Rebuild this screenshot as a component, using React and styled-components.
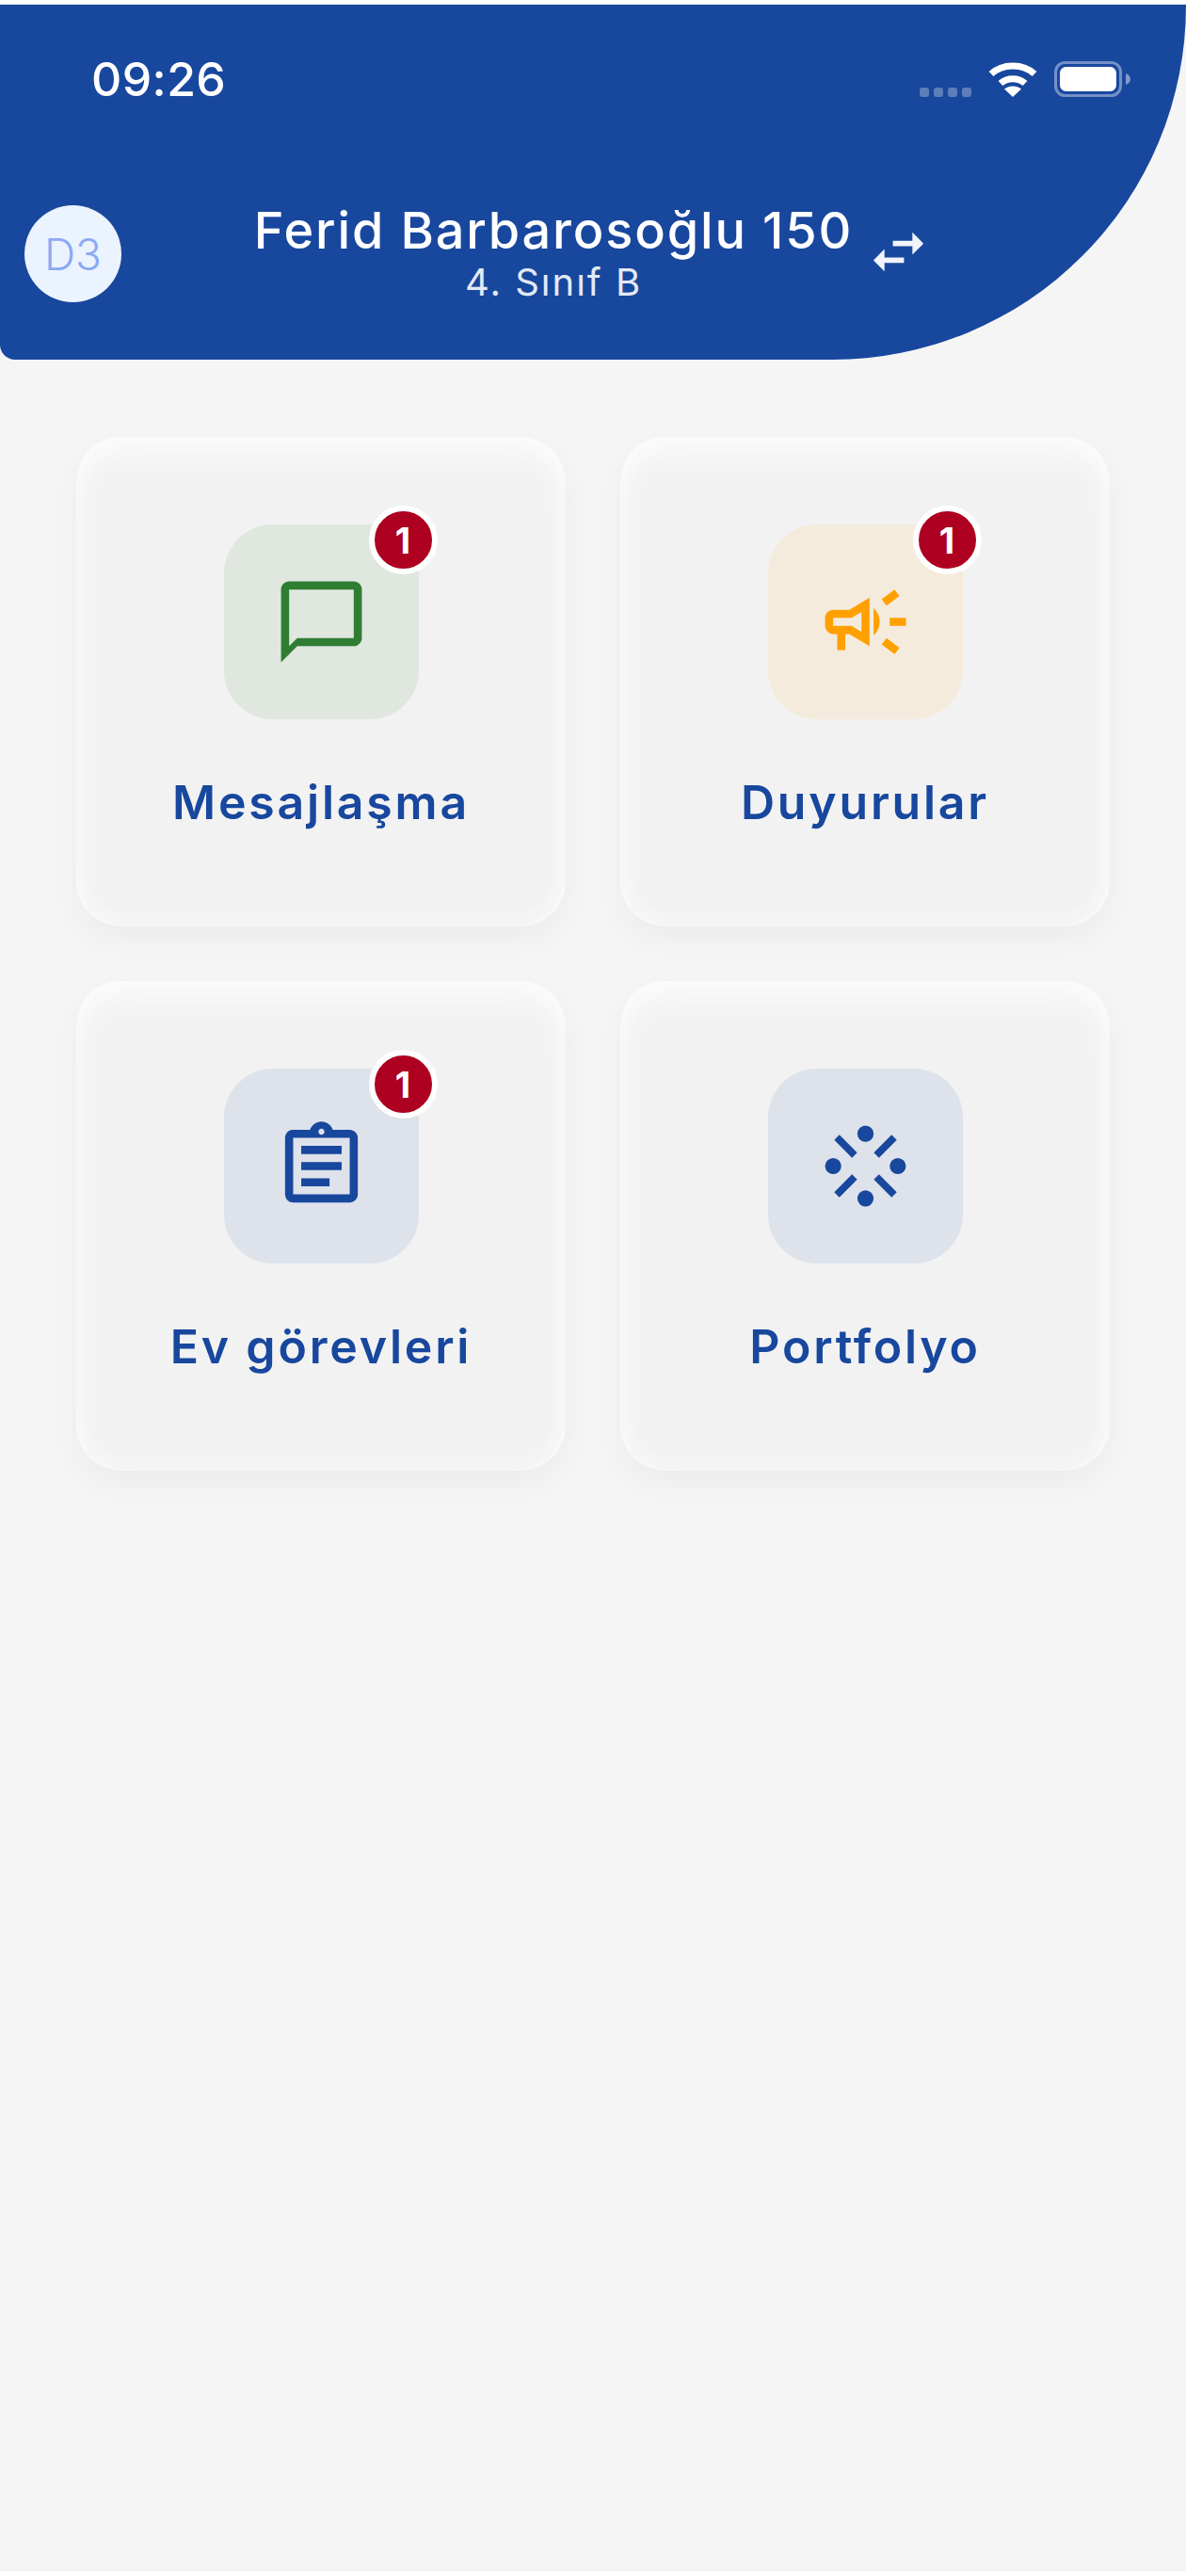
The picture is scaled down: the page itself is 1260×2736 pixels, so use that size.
import React from "react";
import styled, { createGlobalStyle } from "styled-components";
import {
  MdOutlineAssignment,
  MdOutlineCampaign,
  MdOutlineChatBubbleOutline,
  MdSwapHoriz,
} from "react-icons/md";

const BLUE = "#18479e";

const GlobalStyle = createGlobalStyle`
  html, body {
    margin: 0;
    padding: 0;
    background: #fff;
  }
  * {
    box-sizing: border-box;
  }
`;

const Screen = styled.div`
  width: 1260px;
  height: 2736px;
  padding: 4px 0 5px;
  overflow: hidden;
  background: #fff;
  font-family: Inter, "Noto Sans", sans-serif;
`;

const Page = styled.div`
  height: 100%;
  border-top: 1px solid #e1e4e8;
  background: #f5f5f5;
`;

const Header = styled.header`
  height: 377px;
  background: ${BLUE};
  border-radius: 0 0 376px 16px;
`;

const StatusBar = styled.div`
  display: flex;
  align-items: flex-end;
  justify-content: space-between;
  height: 98px;
  padding: 0 59px 0 97px;
  color: #fff;
`;

const Time = styled.span`
  font-size: 50px;
  font-weight: 550;
  line-height: 37px;
  letter-spacing: 0.4px;
`;

const StatusIcons = styled.div`
  display: flex;
  align-items: flex-end;
`;

const SignalDots = styled.div`
  display: flex;
  gap: 5px;
  margin-right: 18px;
`;

const SignalDot = styled.span`
  width: 10px;
  height: 10px;
  border-radius: 3px;
  background: rgba(255, 255, 255, 0.3);
`;

const WifiIcon = styled.svg`
  display: block;
  width: 52px;
  height: 39px;
  margin-right: 18px;
`;

const BatteryIcon = styled.svg`
  display: block;
  width: 81px;
  height: 38px;
`;

const Profile = styled.div`
  display: flex;
  align-items: flex-start;
  margin-top: 115px;
  padding-left: 26px;
`;

const Avatar = styled.div`
  display: flex;
  align-items: center;
  justify-content: center;
  flex: none;
  width: 103px;
  height: 103px;
  border-radius: 50%;
  background: #ebf3ff;
  color: #8aa9f5;
  font-size: 46px;
  font-weight: 300;
`;

const Student = styled.div`
  display: flex;
  flex-direction: column;
  align-items: center;
  gap: 8px;
  width: 632px;
  margin-left: 143px;
  padding-top: 2px;
`;

const StudentName = styled.div`
  font-size: 54px;
  font-weight: 500;
  line-height: 50px;
  letter-spacing: 1.85px;
  color: #fff;
  white-space: nowrap;
`;

const StudentClass = styled.div`
  font-size: 40px;
  font-weight: 400;
  line-height: 44px;
  letter-spacing: 2px;
  color: #e3e9f5;
  white-space: nowrap;
`;

const SwapButton = styled.div`
  display: flex;
  margin: 14px 0 0 15px;
  color: #f1f4fa;
  font-size: 71px;
  line-height: 0;
`;

const Grid = styled.main`
  display: grid;
  grid-template-columns: repeat(2, 520px);
  grid-auto-rows: 520px;
  gap: 58px;
  padding: 82px 0 0 81px;
`;

const Card = styled.div`
  display: flex;
  flex-direction: column;
  align-items: center;
  padding-top: 93px;
  border-radius: 48px;
  background: #f2f2f2;
  box-shadow:
    0 14px 34px rgba(0, 0, 0, 0.04),
    inset 0 16px 30px rgba(255, 255, 255, 0.7),
    inset 0 -8px 26px rgba(255, 255, 255, 0.3),
    inset 0 0 34px rgba(255, 255, 255, 0.3);
`;

const IconTile = styled.div`
  position: relative;
  display: flex;
  align-items: center;
  justify-content: center;
  width: 207px;
  height: 207px;
  border-radius: 52px;
  background: ${(p) => p.$bg};
  color: ${(p) => p.$fg};
  font-size: 103px;
  line-height: 0;
`;

const Badge = styled.span`
  position: absolute;
  top: -20px;
  right: -20px;
  display: flex;
  align-items: center;
  justify-content: center;
  width: 73px;
  height: 73px;
  border: 6px solid #fff;
  border-radius: 50%;
  background: #ae0020;
  color: #fff;
  font-size: 38px;
  font-weight: 700;
  line-height: 1;
`;

const CardLabel = styled.div`
  margin-top: 58px;
  font-size: 50px;
  font-weight: 600;
  line-height: 60px;
  letter-spacing: 2.8px;
  color: ${BLUE};
  white-space: nowrap;
`;

function Wifi() {
  return (
    <WifiIcon viewBox="0 0 52 39" fill="none">
      <path d="M3 14.5C15 3 37 3 49 14.5" stroke="#fff" strokeWidth="7" />
      <path d="M13 24.5C20 18 32 18 39 24.5" stroke="#fff" strokeWidth="7" />
      <path d="M26 39 L17 30.5 C22 26.5 30 26.5 35 30.5 Z" fill="#fff" />
    </WifiIcon>
  );
}

function Battery() {
  return (
    <BatteryIcon viewBox="0 0 81 38" fill="none">
      <rect x="1.5" y="1.5" width="69" height="35" rx="10" stroke="#fff" strokeOpacity="0.4" strokeWidth="3" />
      <rect x="6" y="6" width="60" height="26" rx="6.5" fill="#fff" />
      <path d="M76 13c3 1 5 3 5 6s-2 5-5 6z" fill="#fff" fillOpacity="0.45" />
    </BatteryIcon>
  );
}

function Portfolio() {
  return (
    <svg width="1em" height="1em" viewBox="0 0 24 24" fill="currentColor">
      <circle cx="12" cy="4" r="2" />
      <circle cx="12" cy="20" r="2" />
      <circle cx="4" cy="12" r="2" />
      <circle cx="20" cy="12" r="2" />
      <g stroke="currentColor" strokeWidth="1.8">
        <path d="M4.9 4.9 9.3 9.3" />
        <path d="M19.1 4.9 14.7 9.3" />
        <path d="M4.9 19.1 9.3 14.7" />
        <path d="M19.1 19.1 14.7 14.7" />
      </g>
    </svg>
  );
}

const items = [
  { label: "Mesajlaşma", icon: <MdOutlineChatBubbleOutline />, bg: "#dfe7df", fg: "#2f7d32", badge: 1 },
  { label: "Duyurular", icon: <MdOutlineCampaign />, bg: "#f4ebdc", fg: "#ffa000", badge: 1 },
  { label: "Ev görevleri", icon: <MdOutlineAssignment />, bg: "#dde2eb", fg: BLUE, badge: 1 },
  { label: "Portfolyo", icon: <Portfolio />, bg: "#dde2eb", fg: BLUE },
];

export default function App() {
  return (
    <Screen>
      <GlobalStyle />
      <Page>
        <Header>
          <StatusBar>
            <Time>09:26</Time>
            <StatusIcons>
              <SignalDots>
                <SignalDot />
                <SignalDot />
                <SignalDot />
                <SignalDot />
              </SignalDots>
              <Wifi />
              <Battery />
            </StatusIcons>
          </StatusBar>
          <Profile>
            <Avatar>D3</Avatar>
            <Student>
              <StudentName>Ferid Barbarosoğlu 150</StudentName>
              <StudentClass>4. Sınıf B</StudentClass>
            </Student>
            <SwapButton>
              <MdSwapHoriz />
            </SwapButton>
          </Profile>
        </Header>
        <Grid>
          {items.map((item) => (
            <Card key={item.label}>
              <IconTile $bg={item.bg} $fg={item.fg}>
                {item.icon}
                {item.badge && <Badge>{item.badge}</Badge>}
              </IconTile>
              <CardLabel>{item.label}</CardLabel>
            </Card>
          ))}
        </Grid>
      </Page>
    </Screen>
  );
}
